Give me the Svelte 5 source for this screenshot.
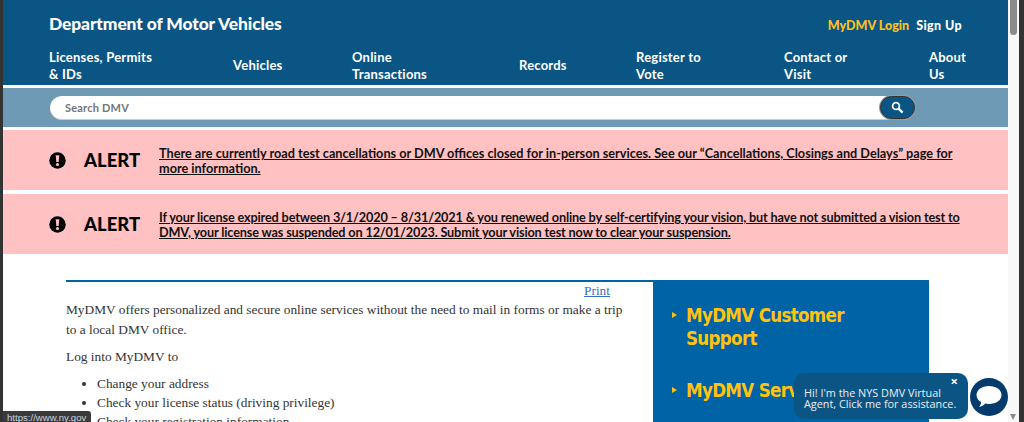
<script lang="ts">
	const nav = [
		{ label: 'Licenses, Permits & IDs', width: 110 },
		{ label: 'Vehicles' },
		{ label: 'Online Transactions', width: 80 },
		{ label: 'Records' },
		{ label: 'Register to Vote', width: 70 },
		{ label: 'Contact or Visit', width: 70 },
		{ label: 'About Us', width: 40 }
	];

	const alerts = [
		{
			text: 'There are currently road test cancellations or DMV offices closed for in-person services. See our “Cancellations, Closings and Delays” page for more information.',
			tight: false
		},
		{
			text: 'If your license expired between 3/1/2020 – 8/31/2021 & you renewed online by self-certifying your vision, but have not submitted a vision test to DMV, your license was suspended on 12/01/2023. Submit your vision test now to clear your suspension.',
			tight: true
		}
	];

	const tasks = [
		'Change your address',
		'Check your license status (driving privilege)',
		'Check your registration information'
	];
</script>

<div class="window">
	<div class="edge"></div>

	<div class="page">
		<header class="masthead">
			<div class="top-row">
				<span class="site-title">Department of Motor Vehicles</span>
				<div class="account">
					<a class="login" href="#login">MyDMV Login</a>
					<a class="signup" href="#signup">Sign Up</a>
				</div>
			</div>
			<nav class="main-nav">
				{#each nav as item}
					<a href="#nav" style:width={item.width ? `${item.width}px` : null}>{item.label}</a>
				{/each}
			</nav>
		</header>

		<div class="search-band">
			<div class="search-box">
				<span class="placeholder">Search DMV</span>
				<button class="search-btn" aria-label="Search">
					<svg width="13" height="13" viewBox="0 0 13 13" fill="none" stroke="#fff">
						<circle cx="5" cy="5" r="3.4" stroke-width="1.7" />
						<path d="M7.6 7.6 L11.6 11.6" stroke-width="2.2" />
					</svg>
				</button>
			</div>
		</div>

		{#each alerts as alert}
			<div class="alert">
				<svg class="alert-icon" width="17" height="17" viewBox="0 0 17 17">
					<circle cx="8.5" cy="8.5" r="8.2" fill="#000" />
					<path d="M6.7 3.2 H10.3 L9.7 10 H7.3 Z" fill="#ffc1c1" />
					<circle cx="8.5" cy="12.5" r="1.6" fill="#ffc1c1" />
				</svg>
				<strong class="alert-label">ALERT</strong>
				<a class="alert-text" class:tight={alert.tight} href="#alert">{alert.text}</a>
			</div>
		{/each}

		<main class="content">
			<section class="copy">
				<div class="print"><a href="#print">Print</a></div>
				<p>MyDMV offers personalized and secure online services without the need to mail in forms or make a trip to a local DMV office.</p>
				<p>Log into MyDMV to</p>
				<ul>
					{#each tasks as task}
						<li>{task}</li>
					{/each}
				</ul>
			</section>
			<aside class="side">
				<a href="#support">MyDMV Customer Support</a>
				<a href="#services">MyDMV Services</a>
			</aside>
		</main>
	</div>

	<div class="scrollbar">
		<div class="thumb"></div>
		<div class="arrow"></div>
	</div>
	<div class="edge right"></div>

	<div class="status">https://www.ny.gov</div>

	<div class="chat-bubble">
		<span class="chat-close">×</span>
		Hi! I'm the NYS DMV Virtual Agent, Click me for assistance.
	</div>
	<button class="chat-launcher" aria-label="Open chat">
		<svg width="28" height="26" viewBox="0 0 28 26">
			<path d="M14 2 C21 2 26.5 5.8 26.5 11 C26.5 16.2 21 20 14 20 C12.6 20 11.4 19.9 10.2 19.6 C8.6 21.4 6.4 22.6 4 23 C5.3 21.6 6 20 6.1 18 C3.2 16.4 1.5 13.9 1.5 11 C1.5 5.8 7 2 14 2 Z" fill="#fff" />
		</svg>
	</button>
</div>

<style>
	:global(body) {
		overflow: hidden;
		background: #fff;
	}

	a {
		color: inherit;
	}

	.window {
		position: relative;
		display: flex;
		height: 422px;
		overflow: hidden;
		font-family: Lato, 'Liberation Sans', sans-serif;
	}

	.edge {
		flex: 0 0 3px;
		background: #333;
	}

	.edge.right {
		flex-basis: 5px;
	}

	.page {
		flex: 0 0 1005px;
		min-width: 0;
		height: 422px;
		overflow: hidden;
	}

	.masthead {
		height: 85px;
		box-sizing: border-box;
		padding: 0 0 0 46px;
		background: #0b5585;
		color: #fff;
	}

	.top-row {
		display: flex;
		justify-content: space-between;
		height: 47px;
		padding-right: 46px;
	}

	.site-title {
		margin-top: 13px;
		font-size: 17.4px;
		line-height: 22px;
		font-weight: 900;
		letter-spacing: -0.1px;
	}

	.account {
		display: flex;
		gap: 7px;
		margin-top: 18px;
		font-size: 12.5px;
		line-height: 16px;
		font-weight: 900;
	}

	.account a {
		text-decoration: none;
	}

	.account .login {
		color: #fdc21d;
	}

	.account .signup {
		letter-spacing: 0.4px;
	}

	.main-nav {
		display: grid;
		grid-template-columns: 184px 119px 167px 117px 148px 145px auto;
		align-items: center;
		height: 37px;
		font-size: 13px;
		line-height: 17px;
		font-weight: 700;
		letter-spacing: 0.22px;
	}

	.main-nav a {
		text-decoration: none;
	}

	.search-band {
		margin-top: 3px;
		height: 39px;
		box-sizing: border-box;
		padding: 8px 93px 0 47px;
		background: #6f9ab5;
	}

	.search-box {
		display: flex;
		align-items: center;
		justify-content: space-between;
		height: 23px;
		padding-left: 15px;
		background: #fff;
		border-radius: 12px;
		border-bottom: 1px solid #ccc;
	}

	.placeholder {
		color: #757575;
		font-size: 11px;
		font-weight: 700;
		letter-spacing: 0.2px;
	}

	.search-btn {
		display: flex;
		align-items: center;
		justify-content: center;
		width: 35px;
		height: 23px;
		padding: 0;
		background: #0b5585;
		border: 1px solid #333;
		border-radius: 12px;
		box-shadow: 0 0 0 1px #999;
	}

	.alert {
		display: flex;
		align-items: center;
		height: 60px;
		margin-top: 3px;
		padding-left: 46px;
		background: #ffc1c1;
		color: #111;
	}

	.alert + .alert {
		margin-top: 4px;
	}

	.alert-icon {
		flex: none;
	}

	.alert-label {
		flex: none;
		width: 75px;
		margin-left: 18px;
		font-size: 18.5px;
		font-weight: 900;
		color: #000;
	}

	.alert-text {
		width: 805px;
		margin-top: 2px;
		font-size: 12.7px;
		line-height: 15px;
		font-weight: 700;
	}

	.alert-text.tight {
		letter-spacing: -0.15px;
	}

	.content {
		display: flex;
		margin: 26px 0 0 63px;
		width: 863px;
		border-top: 2px solid #0063a6;
		font-family: 'Liberation Serif', serif;
		font-size: 13.35px;
		line-height: 20px;
		color: #333;
	}

	.copy {
		width: 560px;
		padding-right: 27px;
	}

	.print {
		text-align: right;
		padding-right: 16px;
		height: 18px;
		line-height: 18px;
	}

	.print a {
		color: #3b6fc4;
	}

	.copy p {
		margin: 0 0 7px;
	}

	.copy ul {
		margin: 7px 0 0;
		padding-left: 31px;
		line-height: 19px;
	}

	.side {
		flex: 1;
		display: flex;
		flex-direction: column;
		gap: 29px;
		height: 160px;
		margin-top: -2px;
		padding: 24px 19px 0 33px;
		background: #0063a6;
		color: #ffc20e;
		font-family: 'DejaVu Sans', sans-serif;
		font-stretch: condensed;
		font-size: 18.6px;
		line-height: 23px;
		font-weight: 700;
		letter-spacing: -0.7px;
	}

	.side a {
		position: relative;
		text-decoration: none;
	}

	.side a::before {
		content: '';
		position: absolute;
		left: -14px;
		top: 8px;
		border-left: 5px solid #ffc20e;
		border-top: 3.5px solid transparent;
		border-bottom: 3.5px solid transparent;
	}

	.scrollbar {
		position: relative;
		flex: 0 0 11px;
		background: #f8f8f8;
	}

	.thumb {
		position: absolute;
		top: 0;
		left: 2px;
		width: 7px;
		height: 35px;
		border-radius: 0 0 4px 4px;
		background: #8a8a8a;
	}

	.arrow {
		position: absolute;
		left: 2px;
		bottom: 2px;
		border-top: 6px solid #8a8a8a;
		border-left: 3.5px solid transparent;
		border-right: 3.5px solid transparent;
	}

	.status {
		position: absolute;
		left: 3px;
		bottom: 0;
		width: 84px;
		height: 11px;
		padding-left: 4px;
		background: #3a3a3a;
		border-radius: 0 3px 0 0;
		color: #c8d4e0;
		font-family: 'Liberation Sans', sans-serif;
		font-size: 9.6px;
		line-height: 13px;
	}

	.chat-bubble {
		position: absolute;
		left: 794px;
		top: 373px;
		width: 174px;
		height: 46px;
		box-sizing: border-box;
		padding: 14px 5px 0 10px;
		background: #0b5585;
		border-radius: 10px;
		color: #eee;
		font-family: 'Open Sans', sans-serif;
		font-size: 10.85px;
		line-height: 11px;
	}

	.chat-close {
		position: absolute;
		top: 2px;
		right: 10px;
		font-size: 13px;
		line-height: 13px;
		font-weight: 700;
		color: #fff;
	}

	.chat-launcher {
		position: absolute;
		left: 970px;
		top: 378px;
		display: flex;
		align-items: center;
		justify-content: center;
		width: 38px;
		height: 38px;
		padding: 0;
		border: none;
		border-radius: 50%;
		background: #043b6d;
	}
</style>
